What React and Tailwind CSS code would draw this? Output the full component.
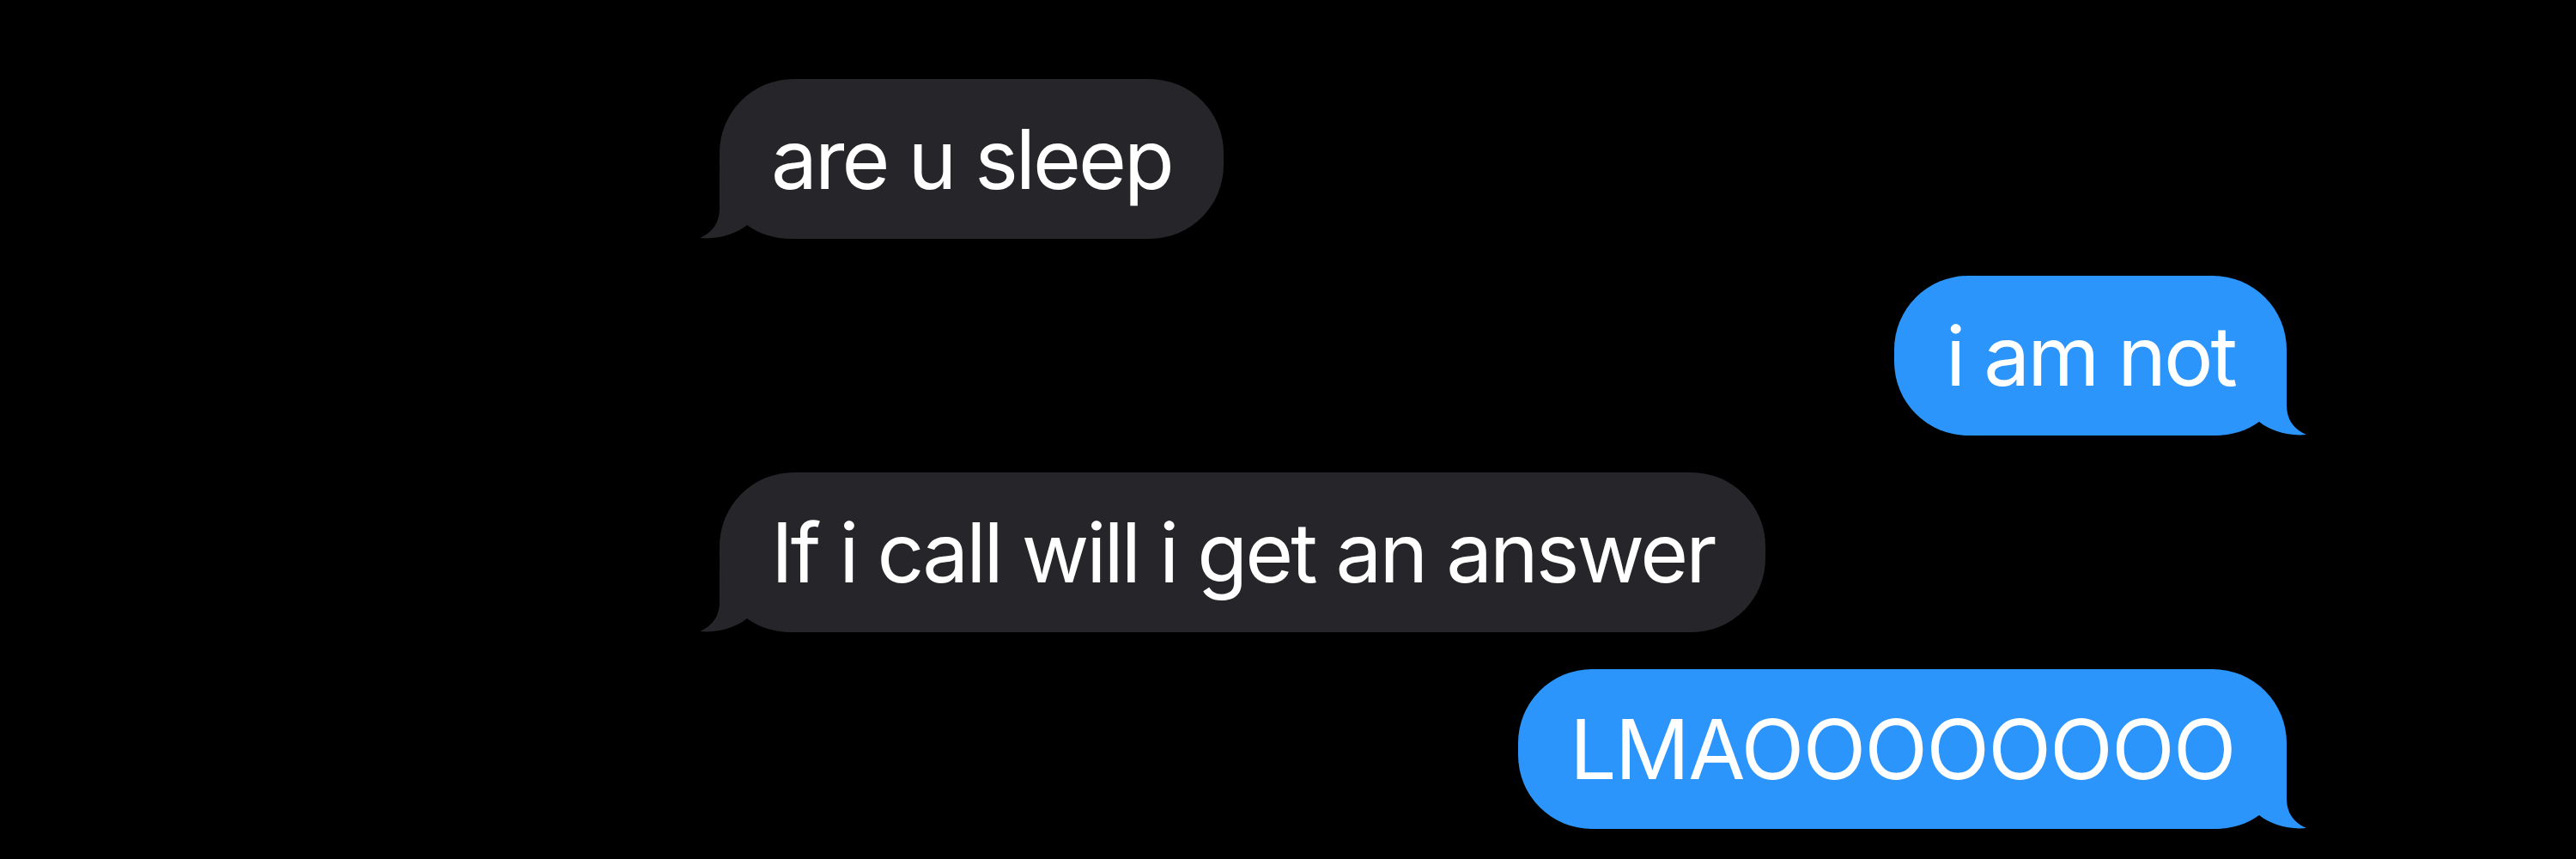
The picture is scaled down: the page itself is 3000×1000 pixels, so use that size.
import React from 'react';

const messages = [
  { from: 'them', text: 'are u sleep', track: 'tracking-[-3px]' },
  { from: 'me', text: 'i am not', track: 'tracking-[-3px]' },
  { from: 'them', text: 'If i call will i get an answer', track: 'tracking-[-3px]' },
  { from: 'me', text: 'LMAOOOOOOOO', track: 'tracking-[-1.5px]' },
];

// the tail replaces the bubble's bottom corner, so it covers the whole corner quadrant
function Tail({ side, color }) {
  const pos = side === 'left' ? 'left-[-24px] bottom-[-4px]' : 'right-[-24px] bottom-[-4px] -scale-x-100';
  return (
    <svg className={`absolute ${pos}`} width="110" height="90" viewBox="0 0 110 90">
      <path d="M24,0 L24,50 C24,68 15,79 1,85 C22,87 42,81 56,70 C70,80 86,86 110,86 L110,0 Z" fill={color} />
    </svg>
  );
}

function Bubble({ from, text, track }) {
  const mine = from === 'me';
  const color = mine ? '#2c95fc' : '#262529';
  return (
    <div className={`relative ${mine ? 'self-end' : 'self-start'}`}>
      <Tail side={mine ? 'right' : 'left'} color={color} />
      <div
        className={`relative h-[186px] px-[60px] flex items-center rounded-[86px] text-white text-[96px] leading-none ${track} ${mine ? 'bg-[#2c95fc]' : 'bg-[#262529]'}`}
      >
        {text}
      </div>
    </div>
  );
}

export default function App() {
  return (
    <div className="w-[3000px] h-[1000px] bg-black overflow-hidden font-['Inter',sans-serif]">
      <div className="flex flex-col gap-[43px] pt-[92px] pl-[838px] pr-[337px]">
        {messages.map((m, i) => (
          <Bubble key={i} {...m} />
        ))}
      </div>
    </div>
  );
}
